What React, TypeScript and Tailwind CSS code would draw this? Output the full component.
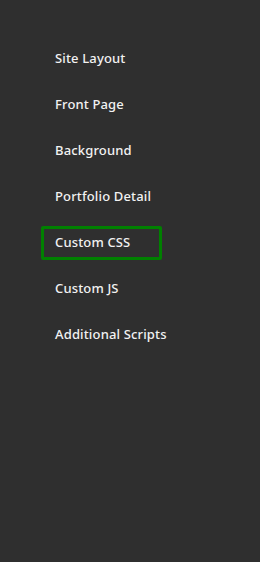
const items = [
  "Site Layout",
  "Front Page",
  "Background",
  "Portfolio Detail",
  "Custom CSS",
  "Custom JS",
  "Additional Scripts",
];

export default function App() {
  const active = "Custom CSS";
  return (
    <div className="w-[260px] h-[562px] bg-[#2f2f2f] pt-[42px] pl-[41px] font-['Noto_Sans',sans-serif]">
      <ul className="flex flex-col gap-[12px]">
        {items.map((item) => (
          <li
            key={item}
            className={
              "w-[121px] h-[34px] flex items-center pl-[11px] whitespace-nowrap rounded-[2px] border-[3px] text-[13px] font-medium tracking-[0.15px] text-[#f2f2f2] " +
              (item === active ? "border-[#008000]" : "border-transparent")
            }
          >
            {item}
          </li>
        ))}
      </ul>
    </div>
  );
}
